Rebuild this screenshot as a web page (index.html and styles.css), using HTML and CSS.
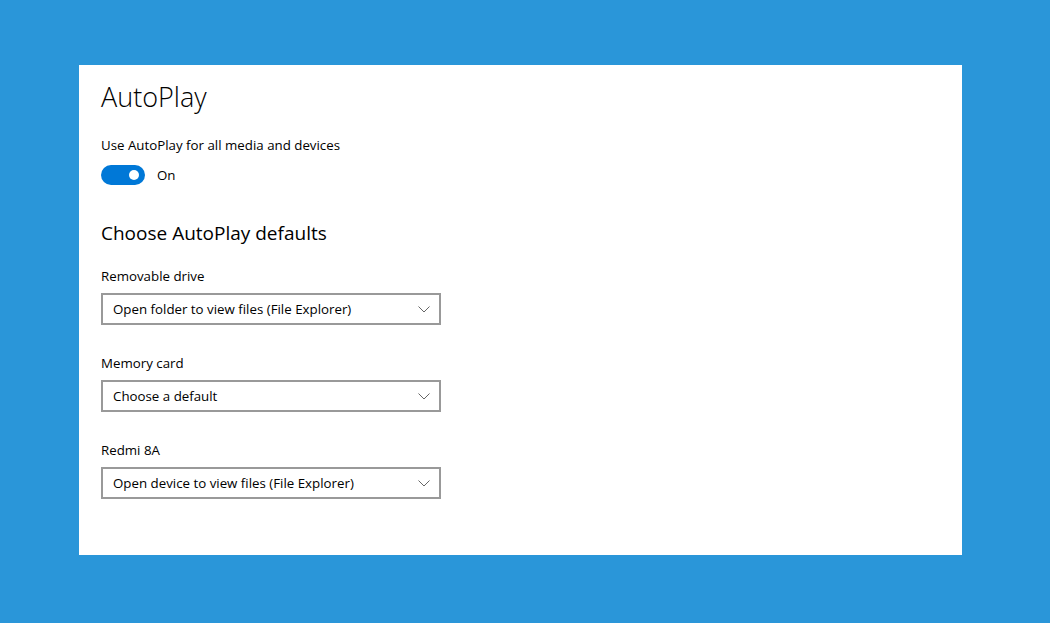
FILE: index.html
```html
<!DOCTYPE html>
<html lang="en">
<head>
  <meta charset="UTF-8">
  <title>AutoPlay</title>
  <link rel="stylesheet" href="styles.css">
</head>
<body>
  <section class="panel">
    <h1>AutoPlay</h1>

    <p class="label">Use AutoPlay for all media and devices</p>
    <div class="toggle-row">
      <span class="toggle on"><span class="knob"></span></span>
      <span class="toggle-text">On</span>
    </div>

    <h2>Choose AutoPlay defaults</h2>

    <div class="field">
      <p class="label">Removable drive</p>
      <div class="select">
        <span>Open folder to view files (File Explorer)</span>
        <svg width="12" height="7" viewBox="0 0 12 7"><path d="M0.5 0.5 L6 6 L11.5 0.5" fill="none" stroke="#666" stroke-width="1"/></svg>
      </div>
    </div>

    <div class="field">
      <p class="label">Memory card</p>
      <div class="select">
        <span>Choose a default</span>
        <svg width="12" height="7" viewBox="0 0 12 7"><path d="M0.5 0.5 L6 6 L11.5 0.5" fill="none" stroke="#666" stroke-width="1"/></svg>
      </div>
    </div>

    <div class="field">
      <p class="label">Redmi 8A</p>
      <div class="select">
        <span>Open device to view files (File Explorer)</span>
        <svg width="12" height="7" viewBox="0 0 12 7"><path d="M0.5 0.5 L6 6 L11.5 0.5" fill="none" stroke="#666" stroke-width="1"/></svg>
      </div>
    </div>
  </section>
</body>
</html>
```

FILE: styles.css
```css
* { box-sizing: border-box; }
body {
  margin: 0;
  padding: 65px 0 0 79px;
  background: #2a96d9;
  font-family: 'Open Sans', 'Noto Sans', sans-serif;
  color: #000;
}
.panel {
  width: 883px;
  height: 490px;
  background: #fff;
  padding: 12px 22px 0;
}
h1 {
  margin: 0;
  font-size: 27px;
  font-weight: 300;
  line-height: 40px;
}
.label {
  margin: 0;
  font-size: 13.3px;
  line-height: 20px;
}
.panel > .label { margin-top: 18px; }

.toggle-row {
  display: flex;
  align-items: center;
  gap: 12px;
  margin-top: 10px;
}
.toggle {
  width: 44px;
  height: 20px;
  border-radius: 10px;
  background: #0078d7;
  position: relative;
}
.toggle .knob {
  position: absolute;
  right: 6px; top: 5px;
  width: 10px; height: 10px;
  border-radius: 50%;
  background: #fff;
}
.toggle-text { font-size: 13.3px; }

h2 {
  margin: 34px 0 0;
  font-size: 19px;
  font-weight: 400;
  line-height: 28px;
}
.field { margin-top: 19px; }
.field + .field { margin-top: 28px; }
.field .select { margin-top: 7px; }
.select {
  width: 340px;
  height: 32px;
  border: 2px solid #999;
  display: flex;
  align-items: center;
  justify-content: space-between;
  padding: 0 9px 0 10px;
  font-size: 13.3px;
}
```
